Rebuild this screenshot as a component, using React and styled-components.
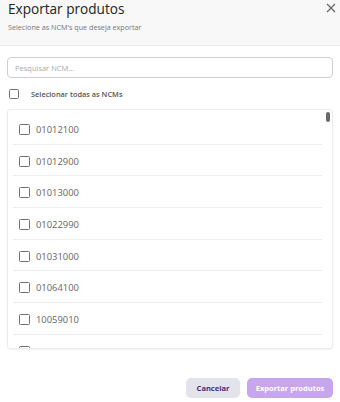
import React, { useState } from "react";
import styled, { createGlobalStyle } from "styled-components";

const GlobalStyle = createGlobalStyle`
  html, body {
    margin: 0;
    padding: 0;
    background: #fff;
    font-family: "Open Sans", "Liberation Sans", sans-serif;
  }
  * { box-sizing: border-box; }
`;

const ncms = [
  "01012100",
  "01012900",
  "01013000",
  "01022990",
  "01031000",
  "01064100",
  "10059010",
  "10019000",
  "10063021",
  "11010010",
  "11022000",
  "12010090",
  "12019000",
  "15071000",
  "17011400",
  "17019900",
  "19012000",
  "20098990",
  "21069090",
  "22021000",
  "22029900",
  "23040010",
];

const App = () => {
  const [checked, setChecked] = useState({});
  const toggle = (code) => setChecked({ ...checked, [code]: !checked[code] });

  return (
    <>
      <GlobalStyle />
      <Modal>
        <Header>
          <Title>Exportar produtos</Title>
          <Subtitle>Selecione as NCM's que deseja exportar</Subtitle>
          <Close aria-label="Fechar">
            <svg width="10" height="10" viewBox="0 0 10 10">
              <path d="M1 1 L9 9 M9 1 L1 9" stroke="#666" strokeWidth="1.2" />
            </svg>
          </Close>
        </Header>

        <Body>
          <Search placeholder="Pesquisar NCM..." />
          <SelectAll>
            <Box $size={10} />
            <SelectLabel>Selecionar todas as NCMs</SelectLabel>
          </SelectAll>

          <ListWrap>
            <List>
              {ncms.map((code) => (
                <Row key={code} onClick={() => toggle(code)}>
                  <Box $size={11} $on={checked[code]} />
                  <Code>{code}</Code>
                </Row>
              ))}
            </List>
            <Thumb />
          </ListWrap>
        </Body>

        <Footer>
          <Button $variant="secondary">Cancelar</Button>
          <Button $variant="primary" disabled>
            Exportar produtos
          </Button>
        </Footer>
      </Modal>
    </>
  );
};

const Modal = styled.div`
  width: 340px;
  height: 402px;
  display: flex;
  flex-direction: column;
  background: #fff;
`;

const Header = styled.header`
  position: relative;
  height: 46px;
  padding: 0 8px;
  background: #f8f8f9;
  border-bottom: 1px solid #ececee;
`;

const Title = styled.h2`
  margin: 0;
  font-size: 13.6px;
  line-height: 18px;
  font-weight: 500;
  color: #222;
`;

const Subtitle = styled.p`
  margin: 4px 0 0;
  font-size: 7.2px;
  line-height: 10px;
  color: #777;
`;

const Close = styled.button`
  position: absolute;
  top: 3px;
  right: 4px;
  border: none;
  background: transparent;
  padding: 0;
  width: 10px;
  height: 10px;
  display: grid;
  place-items: center;
  cursor: pointer;
`;

const Body = styled.div`
  padding: 11px 7px 0;
  display: flex;
  flex-direction: column;
`;

const Search = styled.input`
  height: 21px;
  width: 100%;
  border: 1px solid #cfcfd3;
  border-radius: 4px;
  padding: 0 7px;
  font-family: inherit;
  font-size: 7.5px;
  outline: none;
  &::placeholder {
    color: #aaa;
  }
`;

const SelectAll = styled.label`
  display: flex;
  align-items: center;
  gap: 12px;
  height: 30px;
  padding-left: 2px;
  margin-top: 1px;
`;

const SelectLabel = styled.span`
  font-size: 7.4px;
  font-weight: 600;
  color: #555;
`;

const Box = styled.span`
  width: ${({ $size }) => $size}px;
  height: ${({ $size }) => $size}px;
  flex: none;
  border: 1.5px solid #707070;
  border-radius: 1.5px;
  background: ${({ $on }) => ($on ? "#707070" : "#fff")};
`;

const ListWrap = styled.div`
  position: relative;
  height: 240px;
  border: 1px solid #ececee;
  border-radius: 3px;
  box-shadow: 0 1px 2px rgba(0, 0, 0, 0.05);
  overflow: hidden;
`;

const List = styled.div`
  height: 100%;
  overflow-y: auto;
  padding: 3px 10px 0 5px;
  scrollbar-width: none;
  &::-webkit-scrollbar {
    display: none;
  }
`;

const Thumb = styled.span`
  position: absolute;
  top: 2px;
  right: 2px;
  width: 4px;
  height: 10px;
  border-radius: 2px;
  background: #6b6b6b;
`;

const Row = styled.div`
  display: flex;
  align-items: center;
  gap: 6px;
  height: 31.7px;
  padding: 2px 0 0 6px;
  border-bottom: 1px solid #ececee;
  cursor: pointer;
`;

const Code = styled.span`
  font-size: 9.4px;
  color: #666;
`;

const Footer = styled.footer`
  margin-top: auto;
  display: flex;
  justify-content: flex-end;
  gap: 7px;
  padding: 0 7px 4px;
`;

const Button = styled.button`
  height: 20px;
  border: none;
  border-radius: 5px;
  padding: 0;
  font-family: inherit;
  font-size: 7.5px;
  font-weight: 700;
  cursor: pointer;
  color: ${({ $variant }) => ($variant === "primary" ? "#fff" : "#4b2a7b")};
  background: ${({ $variant }) =>
    $variant === "primary" ? "#c8a6ee" : "#e3e3ec"};
  width: ${({ $variant }) => ($variant === "primary" ? "86px" : "54px")};
  &:disabled {
    cursor: default;
  }
`;

export default App;
